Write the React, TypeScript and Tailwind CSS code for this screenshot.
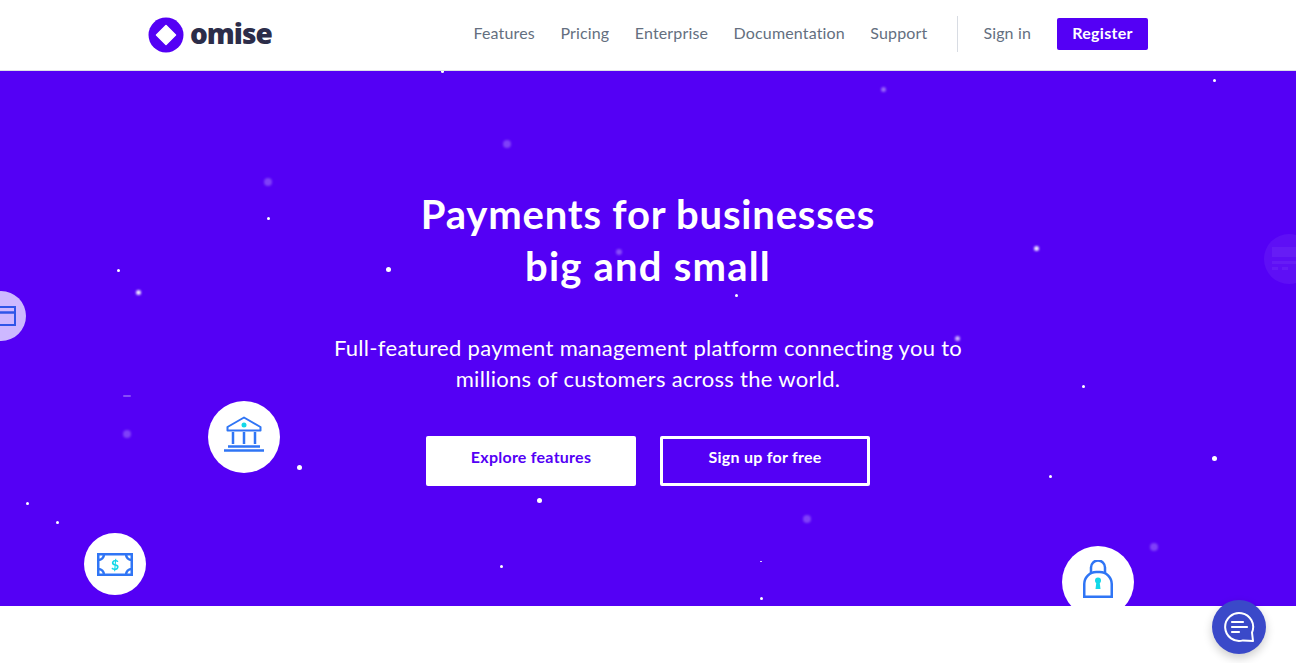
const navLinks = ["Features", "Pricing", "Enterprise", "Documentation", "Support"];

// x, y (page coords), width, height, opacity, blurred
const stars: [number, number, number, number, number, boolean][] = [
  [442, 71, 3, 3, 1, false],
  [883, 89, 5, 5, 0.4, true],
  [1214, 80, 3, 3, 1, false],
  [507, 144, 8, 8, 0.25, true],
  [268, 182, 8, 8, 0.25, true],
  [268, 218, 3, 3, 1, false],
  [118, 270, 3, 3, 1, false],
  [138, 292, 5, 5, 0.9, true],
  [388, 269, 5, 5, 1, false],
  [619, 252, 6, 6, 0.3, true],
  [736, 295, 3, 3, 1, false],
  [1036, 248, 5, 5, 0.9, true],
  [957, 338, 5, 5, 0.7, true],
  [1083, 386, 3, 3, 1, false],
  [127, 434, 8, 8, 0.25, true],
  [127, 396, 8, 2, 0.3, false],
  [299, 467, 5, 5, 1, false],
  [1214, 458, 5, 5, 1, false],
  [1050, 476, 3, 3, 1, false],
  [27, 503, 3, 3, 1, false],
  [57, 522, 3, 3, 1, false],
  [539, 500, 5, 5, 1, false],
  [807, 519, 8, 8, 0.25, true],
  [1154, 547, 8, 8, 0.25, true],
  [501, 566, 3, 3, 1, false],
  [761, 561, 2, 1, 0.9, false],
  [761, 598, 3, 3, 1, false],
];

function Logo() {
  return (
    <div className="flex items-center gap-[6px]">
      <svg width="36" height="36" viewBox="0 0 36 36">
        <circle cx="18" cy="18" r="17.500" fill="#5400f5" />
        <path d="M18 8.500 27.500 18 18 27.500 8.500 18Z" fill="#fff" stroke="#fff" strokeWidth="1.500" strokeLinejoin="round" />
      </svg>
      <span className="pb-[4px] font-['Open_Sans',sans-serif] text-[28px] leading-none font-extrabold tracking-[-1px] text-[#2c2d49]">
        omise
      </span>
    </div>
  );
}

function Header() {
  return (
    <header className="h-[71px] border-b border-[#dcdfe6] bg-white">
      <div className="mx-auto flex h-[70px] w-[1000px] items-center justify-between font-['Lato',sans-serif]">
        <Logo />
        <nav className="mb-[2px] flex items-center text-[16px] tracking-[0.15px] text-[#646f80]">
          <div className="flex gap-[25.5px] pb-[2px]">
            {navLinks.map((link) => (
              <a key={link} href="#">
                {link}
              </a>
            ))}
          </div>
          <div className="mr-[25px] ml-[30px] h-[36px] w-px bg-[#d8dce3]" />
          <a href="#" className="pb-[2px]">
            Sign in
          </a>
          <a
            href="#"
            className="ml-[26px] flex h-[32px] w-[91px] items-center justify-center rounded-[2px] bg-[#5400f5] pb-[2px] font-bold tracking-[0.3px] text-white"
          >
            Register
          </a>
        </nav>
      </div>
    </header>
  );
}

function BankIcon() {
  return (
    <svg width="40" height="36" viewBox="0 0 40 36" fill="none" stroke="#2f75f5" strokeWidth="2">
      <path d="M3.500 11 20 1.500 36.500 11v3.500h-33Z" strokeLinejoin="round" />
      <path d="M9 16v12M20 16v12M31 16v12" strokeWidth="2.500" />
      <path d="M4 30.500h32" strokeWidth="2.500" />
      <path d="M0 34.500h40" strokeWidth="2.500" />
      <circle cx="20" cy="9" r="2.500" fill="#12d8e8" stroke="none" />
    </svg>
  );
}

function CashIcon() {
  return (
    <svg width="36" height="23" viewBox="0 0 36 23" fill="none" stroke="#2f75f5" strokeWidth="2.500">
      <rect x="1.250" y="1.250" width="33.500" height="20.500" />
      <path d="M1 7c3.500 0 6-2.500 6-6M35 7c-3.500 0-6-2.500-6-6M1 16c3.500 0 6 2.500 6 6M35 16c-3.500 0-6 2.500-6 6" />
      <text
        x="18"
        y="16.500"
        textAnchor="middle"
        fontSize="14"
        fontWeight="700"
        fill="#12d8e8"
        stroke="none"
        fontFamily="Lato, sans-serif"
      >
        $
      </text>
    </svg>
  );
}

function LockIcon() {
  return (
    <svg width="30" height="38" viewBox="0 0 30 38" fill="none" stroke="#2f75f5" strokeWidth="2.500">
      <path d="M8 13V7.500a7 7 0 0 1 14 0V13" />
      <path d="M1.250 36.750V24a12 12 0 0 1 12-12h3.500a12 12 0 0 1 12 12v12.750Z" />
      <circle cx="15" cy="20.500" r="3" fill="#12d8e8" stroke="none" />
      <path d="M13.500 21h3l1 8h-5Z" fill="#12d8e8" stroke="none" />
    </svg>
  );
}

function CardIcon() {
  return (
    <svg width="30" height="20" viewBox="0 0 30 20" fill="none" stroke="#2f55e8" strokeWidth="2">
      <rect x="1" y="1" width="28" height="18" />
      <path d="M1 6.500h28" strokeWidth="2.500" />
    </svg>
  );
}

function ListIcon() {
  return (
    <svg width="34" height="24" viewBox="0 0 34 24" fill="#fff" className="opacity-[0.05]">
      <rect x="0" y="0" width="34" height="10" />
      <rect x="0" y="14" width="34" height="3" />
      <rect x="0" y="20" width="6" height="3" />
      <rect x="10" y="20" width="6" height="3" />
    </svg>
  );
}

function Hero() {
  return (
    <section className="relative h-[535px] overflow-hidden bg-[#5400f5] font-['Lato',sans-serif] text-white">
      {stars.map(([x, y, w, h, opacity, blurred]) => (
        <span
          key={`${x}-${y}`}
          className={blurred ? "absolute rounded-full bg-white blur-[1px]" : "absolute rounded-full bg-white"}
          style={{ left: x - w / 2, top: y - 71 - h / 2, width: w, height: h, opacity }}
        />
      ))}

      <div className="absolute top-[220px] left-[-24px] flex size-[50px] items-center justify-center rounded-full bg-[#cdb8ff] blur-[0.5px]">
        <CardIcon />
      </div>
      <div className="absolute top-[163px] left-[1264px] flex size-[50px] items-center justify-center rounded-full bg-white/[0.06]">
        <ListIcon />
      </div>
      <div className="absolute top-[330px] left-[208px] flex size-[72px] items-center justify-center rounded-full bg-white blur-[0.5px]">
        <div className="mb-[6px]">
          <BankIcon />
        </div>
      </div>
      <div className="absolute top-[462px] left-[84px] flex size-[62px] items-center justify-center rounded-full bg-white blur-[0.5px]">
        <CashIcon />
      </div>
      <div className="absolute top-[475px] left-[1062px] flex size-[72px] items-center justify-center rounded-full bg-white blur-[0.5px]">
        <div className="mb-[6px]">
          <LockIcon />
        </div>
      </div>

      <div className="relative flex flex-col items-center pt-[117px] text-center">
        <h1 className="text-[40px] leading-[52px] font-bold tracking-[0.8px]">
          Payments for businesses
          <br />
          <span className="tracking-[1.2px]">big and small</span>
        </h1>
        <p className="mt-[40px] text-[22px] leading-[31px] tracking-[0.3px]">
          Full-featured payment management platform connecting you to
          <br />
          millions of customers across the world.
        </p>
        <div className="mt-[42px] flex gap-[24px] text-[16px] font-bold tracking-[0.25px]">
          <a href="#" className="flex h-[50px] w-[210px] items-center justify-center rounded-[2px] bg-white pb-[8px] text-[#5400f5]">
            Explore features
          </a>
          <a href="#" className="flex h-[50px] w-[210px] items-center justify-center rounded-[2px] border-[3px] border-white pb-[8px]">
            Sign up for free
          </a>
        </div>
      </div>
    </section>
  );
}

function ChatButton() {
  return (
    <button
      type="button"
      className="fixed right-[30px] bottom-[9px] flex size-[54px] items-center justify-center rounded-full bg-[#3a49c9] shadow-[0_4px_10px_rgba(0,0,0,0.2)]"
    >
      <svg width="32" height="32" viewBox="0 0 32 32" fill="none" stroke="#fff" strokeWidth="2" strokeLinecap="round">
        <path d="M30 30 20 29.400A14 14 0 1 1 29 21.500Z" strokeLinejoin="round" />
        <path d="M9 11h11M9 16h15M9 21h7" strokeWidth="2.200" />
      </svg>
    </button>
  );
}

export default function App() {
  return (
    <div className="min-h-[663px] bg-white">
      <Header />
      <Hero />
      <ChatButton />
    </div>
  );
}
